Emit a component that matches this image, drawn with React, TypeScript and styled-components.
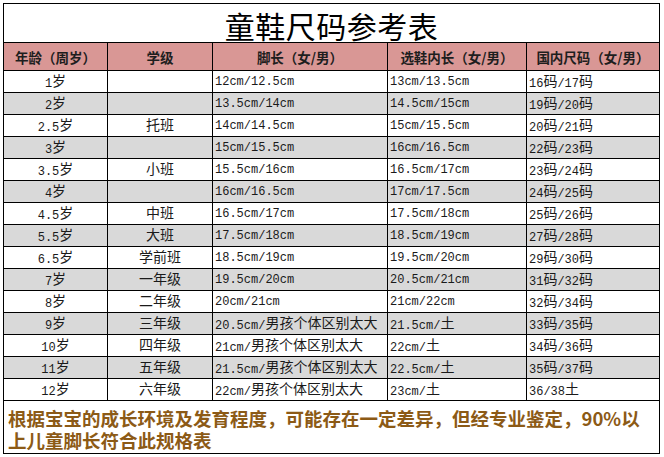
import React from "react"
import styled, { createGlobalStyle } from "styled-components"

const GlobalStyle = createGlobalStyle`
  html, body {
    margin: 0;
    padding: 0;
    background: #fff;
  }
  * {
    box-sizing: border-box;
  }
`

const COLUMNS = "104px 105px 175px 139px 133px"

const Page = styled.div`
  padding: 3px 0 0 3px;
  font-family: "Noto Sans CJK SC", "Liberation Sans", sans-serif;
  color: #111;
`

const Sheet = styled.div`
  width: 657px;
  border-left: 1px solid #000;
  border-top: 1px solid #000;
`

const TitleRow = styled.div`
  height: 39px;
  border-right: 1px solid #000;
  border-bottom: 1px solid #000;
  display: flex;
  align-items: center;
  justify-content: center;
  font-size: 30px;
  font-weight: 400;
  letter-spacing: 0.5px;
  color: #000;
  padding-top: 3px;
`

const Row = styled.div<{ $shade?: boolean; $head?: boolean }>`
  display: grid;
  grid-template-columns: ${COLUMNS};
  height: ${(p) => (p.$head ? "28px" : "22px")};
  background: ${(p) => (p.$head ? "#d99795" : p.$shade ? "#d9d9d9" : "#fff")};
`

const Cell = styled.div<{ $center?: boolean }>`
  border-right: 1px solid #000;
  border-bottom: 1px solid #000;
  display: flex;
  align-items: center;
  justify-content: ${(p) => (p.$center ? "center" : "flex-start")};
  padding: 1px 0 0 ${(p) => (p.$center ? "0" : "2px")};
  white-space: nowrap;
  overflow: hidden;
  font-family: "Liberation Mono", "Noto Sans CJK SC", monospace;
  font-size: 12px;
  color: #1a1a1a;
`

const CellText = styled.span`
  display: inline-block;
  line-height: 16px;
`

const HeadCell = styled.div`
  border-right: 1px solid #000;
  border-bottom: 1px solid #000;
  display: flex;
  align-items: center;
  justify-content: center;
  white-space: nowrap;
  font-size: 13.5px;
  font-weight: 700;
  color: #1e1e1e;
`

const Han = styled.span`
  font-family: "Noto Sans CJK SC", sans-serif;
  font-size: 14px;
  vertical-align: 1px;
`

const Footer = styled.div`
  height: 53px;
  border-right: 1px solid #000;
  border-bottom: 1px solid #000;
  padding: 6px 0 0 4px;
  font-size: 18.5px;
  line-height: 22px;
  font-weight: 700;
  color: #8c5a16;
  white-space: nowrap;
`

const headers = ["年龄（周岁）", "学级", "脚长（女/男）", "选鞋内长（女/男）", "国内尺码（女/男）"]

const rows: string[][] = [
  ["1岁", "", "12cm/12.5cm", "13cm/13.5cm", "16码/17码"],
  ["2岁", "", "13.5cm/14cm", "14.5cm/15cm", "19码/20码"],
  ["2.5岁", "托班", "14cm/14.5cm", "15cm/15.5cm", "20码/21码"],
  ["3岁", "", "15cm/15.5cm", "16cm/16.5cm", "22码/23码"],
  ["3.5岁", "小班", "15.5cm/16cm", "16.5cm/17cm", "23码/24码"],
  ["4岁", "", "16cm/16.5cm", "17cm/17.5cm", "24码/25码"],
  ["4.5岁", "中班", "16.5cm/17cm", "17.5cm/18cm", "25码/26码"],
  ["5.5岁", "大班", "17.5cm/18cm", "18.5cm/19cm", "27码/28码"],
  ["6.5岁", "学前班", "18.5cm/19cm", "19.5cm/20cm", "29码/30码"],
  ["7岁", "一年级", "19.5cm/20cm", "20.5cm/21cm", "31码/32码"],
  ["8岁", "二年级", "20cm/21cm", "21cm/22cm", "32码/34码"],
  ["9岁", "三年级", "20.5cm/男孩个体区别太大", "21.5cm/土", "33码/35码"],
  ["10岁", "四年级", "21cm/男孩个体区别太大", "22cm/土", "34码/36码"],
  ["11岁", "五年级", "21.5cm/男孩个体区别太大", "22.5cm/土", "35码/37码"],
  ["12岁", "六年级", "22cm/男孩个体区别太大", "23cm/土", "36/38土"],
]

// ASCII runs keep the narrow mono face, Chinese runs get the wider CJK size
function Mixed({ text }: { text: string }) {
  const parts = text.match(/[\x00-\x7f]+|[^\x00-\x7f]+/g) ?? []
  return (
    <CellText>
      {parts.map((part, i) =>
        /^[\x00-\x7f]/.test(part) ? part : <Han key={i}>{part}</Han>
      )}
    </CellText>
  )
}

export default function App() {
  return (
    <Page>
      <GlobalStyle />
      <Sheet>
        <TitleRow>童鞋尺码参考表</TitleRow>
        <Row $head>
          {headers.map((h) => (
            <HeadCell key={h}>{h}</HeadCell>
          ))}
        </Row>
        {rows.map((r, i) => (
          <Row key={r[0]} $shade={i % 2 === 1}>
            {r.map((c, j) => (
              <Cell key={j} $center={j < 2}>
                {c && <Mixed text={c} />}
              </Cell>
            ))}
          </Row>
        ))}
        <Footer>
          根据宝宝的成长环境及发育程度，可能存在一定差异，但经专业鉴定，90%以
          <br />
          上儿童脚长符合此规格表
        </Footer>
      </Sheet>
    </Page>
  )
}
